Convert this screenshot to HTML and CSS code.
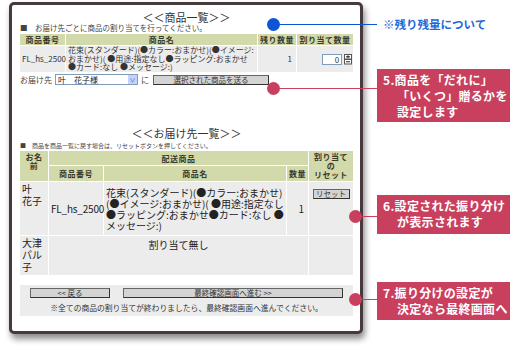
FILE: index.html
```html
<!DOCTYPE html>
<html lang="ja">
<head>
    <meta charset="UTF-8">
    <title>商品の割り当て</title>
    <link rel="stylesheet" href="styles.css">
</head>
<body>
    <div class="page">
        <div class="frame">
            <h2 class="title">＜＜商品一覧＞＞</h2>
            <p class="note">■　お届け先ごとに商品の割り当てを行ってください。</p>

            <table class="grid items">
                <colgroup>
                    <col class="w45"><col class="w191"><col class="w38"><col class="w56">
                </colgroup>
                <tr class="head">
                    <th>商品番号</th>
                    <th>商品名</th>
                    <th>残り数量</th>
                    <th>割り当て数量</th>
                </tr>
                <tr class="row">
                    <td class="code">FL_hs_2500</td>
                    <td class="name">花束(スタンダード)(●カラー:おまかせ)(●イメージ:<br>おまかせ)( ●用途:指定なし●ラッピング:おまかせ<br>●カード:なし ●メッセージ:)</td>
                    <td class="num">1</td>
                    <td class="qty">
                        <span class="numbox">0</span>
                        <svg class="spin" width="8" height="11" viewBox="0 0 8 11">
                            <rect x="0.5" y="0.5" width="7" height="4.5" fill="#fff" stroke="#555"/>
                            <rect x="0.5" y="5.5" width="7" height="4.5" fill="#fff" stroke="#555"/>
                            <path d="M2 2.8h4M4 1.3v3M2 7.8h4" stroke="#222" stroke-width="1"/>
                        </svg>
                    </td>
                </tr>
            </table>

            <div class="send">
                <span>お届け先</span>
                <span class="select">叶　花子様<span class="arrow">∨</span></span>
                <span>に</span>
                <button class="btn send-btn">選択された商品を送る</button>
            </div>

            <h2 class="title second">＜＜お届け先一覧＞＞</h2>
            <p class="note small">■　商品を商品一覧に戻す場合は、リセットボタンを押してください。</p>

            <table class="grid dest">
                <colgroup>
                    <col class="w28"><col class="w54"><col class="w182"><col class="w21"><col class="w44">
                </colgroup>
                <tr class="head h1">
                    <th rowspan="2" class="top">お名<br>前</th>
                    <th colspan="3">配送商品</th>
                    <th rowspan="2" class="top">割り当て<br>の<br>リセット</th>
                </tr>
                <tr class="head h2">
                    <th>商品番号</th>
                    <th>商品名</th>
                    <th>数量</th>
                </tr>
                <tr class="row r1">
                    <td class="who">叶<br>花子</td>
                    <td class="code">FL_hs_2500</td>
                    <td class="name">花束(スタンダード)(●カラー:おまかせ)<br>(●イメージ:おまかせ)( ●用途:指定なし<br>●ラッピング:おまかせ●カード:なし ●<br>メッセージ:)</td>
                    <td class="num">1</td>
                    <td class="reset"><button class="btn reset-btn">リセット</button></td>
                </tr>
                <tr class="row r2">
                    <td class="who">大津<br>パル<br>子</td>
                    <td colspan="3" class="none">割り当て無し</td>
                    <td></td>
                </tr>
            </table>

            <div class="bar">
                <div class="bar-buttons">
                    <button class="btn back">&lt;&lt; 戻る</button>
                    <button class="btn next">最終確認画面へ進む &gt;&gt;</button>
                </div>
                <p class="bar-note">※全ての商品の割り当てが終わりましたら、最終確認画面へ進んでください。</p>
            </div>
        </div>

        <div class="notes">
            <p class="blue-note">※残り残量について</p>
            <div class="callout c5">5.商品を「だれに」<br>「いくつ」贈るかを<br>設定します</div>
            <div class="callout c6">6.設定された振り分け<br>が表示されます</div>
            <div class="callout c7">7.振り分けの設定が<br>決定なら最終画面へ</div>
        </div>

        <span class="pin blue p1"></span>
        <span class="pin p5"></span>
        <span class="pin p6"></span>
        <span class="pin p7"></span>
    </div>
</body>
</html>
```

FILE: styles.css
```css
* {
    margin: 0;
    padding: 0;
    box-sizing: border-box;
}

body {
    font-family: 'Noto Sans CJK JP', 'Liberation Sans', sans-serif;
    background-color: #fff;
    color: #333;
}

.page {
    position: relative;
    display: flex;
    align-items: flex-start;
    padding: 2px 0 0 9px;
    width: 516px;
    height: 350px;
}

.frame {
    width: 354px;
    height: 332px;
    border: 3px solid #463a3c;
    border-radius: 5px;
    box-shadow: 2px 5px 6px rgba(0, 0, 0, 0.45);
    padding: 0 7px 0 8px;
    background-color: #fff;
}

.title {
    font-size: 11px;
    font-weight: normal;
    line-height: 12px;
    text-align: center;
    margin-top: 6px;
    color: #333;
}

.title.second {
    margin-top: 42px;
}

.note {
    font-size: 7.5px;
    line-height: 10px;
    color: #444;
    white-space: nowrap;
}

.note.small {
    font-size: 6px;
    line-height: 9px;
    margin-top: 2px;
}

.grid {
    border-collapse: separate;
    border-spacing: 1px;
    table-layout: fixed;
    width: 335px;
    margin: 0 -1px;
}

.grid th,
.grid td {
    padding: 0;
    background-color: #ececec;
    vertical-align: middle;
}

.grid .head th {
    background-color: #d2d9aa;
    font-size: 8px;
    font-weight: bold;
    color: #3a3a2a;
    letter-spacing: 0.5px;
    text-align: center;
    line-height: 9px;
}

.w45 { width: 45px; }
.w191 { width: 191px; }
.w38 { width: 38px; }
.w56 { width: 56px; }
.w28 { width: 28px; }
.w54 { width: 54px; }
.w182 { width: 182px; }
.w21 { width: 21px; }
.w44 { width: 44px; }

.items .head th {
    height: 11px;
}

.items .row td {
    height: 26px;
    font-size: 8px;
    line-height: 8.5px;
}

.items .code {
    padding-left: 2px;
}

.items .name {
    padding-left: 2px;
    white-space: nowrap;
}

.num {
    text-align: right;
    padding-right: 4px !important;
}

.qty {
    text-align: right;
    padding-right: 1px !important;
}

.numbox {
    display: inline-block;
    width: 20px;
    height: 11px;
    border: 1px solid #7f9db9;
    background-color: #fff;
    font-size: 8px;
    line-height: 9px;
    text-align: right;
    padding-right: 2px;
    vertical-align: middle;
}

.spin {
    vertical-align: middle;
}

.send {
    display: flex;
    align-items: center;
    gap: 3px;
    font-size: 8px;
    color: #444;
    margin-top: 1px;
    height: 11px;
}

.select {
    position: relative;
    display: inline-block;
    width: 83px;
    height: 11px;
    border: 1px solid #7f9db9;
    font-size: 8px;
    line-height: 9px;
    padding-left: 2px;
    color: #222;
}

.arrow {
    position: absolute;
    right: 0;
    top: 0;
    width: 9px;
    height: 9px;
    background-color: #c3d3fd;
    color: #4d6185;
    font-size: 6px;
    line-height: 9px;
    text-align: center;
}

.btn {
    font-family: 'Noto Sans CJK JP', 'Liberation Sans', sans-serif;
    background-color: #d4d4d4;
    border: 1px solid #666;
    border-right-color: #333;
    border-bottom-color: #333;
    color: #333;
    font-size: 7.5px;
    line-height: 8px;
    height: 10px;
    cursor: pointer;
}

.send-btn {
    width: 116px;
    margin-left: 1px;
}

.dest .h1 th {
    height: 14px;
}

.dest .h2 th {
    height: 15px;
}

.dest .head th.top {
    vertical-align: top;
    padding-top: 1px;
    line-height: 9px;
}

.dest .row td {
    font-size: 10px;
    line-height: 11px;
    color: #222;
}

.dest .r1 td {
    height: 53px;
}

.dest .r2 td {
    height: 39px;
}

.dest .row .who {
    vertical-align: top;
    padding: 1px 0 0 2px;
    line-height: 12px;
}

.dest .code {
    font-size: 8.5px;
    letter-spacing: -0.2px;
    padding-left: 2px;
    white-space: nowrap;
}

.dest .name {
    padding-left: 2px;
    white-space: nowrap;
    font-size: 9.6px;
}

.dest .reset {
    vertical-align: top;
    text-align: center;
    padding-top: 5px;
}

.reset-btn {
    width: 37px;
}

.dest .none {
    vertical-align: top;
    text-align: center;
    padding-top: 3px;
}

.bar {
    margin-top: 9px;
    background-color: #ececec;
    height: 31px;
    padding-top: 3px;
}

.bar-buttons {
    display: flex;
    gap: 13px;
    padding-left: 10px;
}

.back {
    width: 80px;
}

.next {
    width: 220px;
}

.bar-note {
    font-size: 7.8px;
    line-height: 10px;
    text-align: center;
    margin-top: 5px;
    color: #333;
    white-space: nowrap;
}

.notes {
    margin-left: 14px;
    width: 133px;
}

.blue-note {
    margin-top: 15px;
    height: 14px;
    font-size: 11.5px;
    line-height: 14px;
    font-weight: bold;
    color: #1c6ad8;
    padding-left: 6px;
    white-space: nowrap;
}

.callout {
    background-color: #c9405f;
    color: #fff;
    font-size: 12px;
    font-weight: bold;
    line-height: 16px;
    padding: 3px 0 0 20px;
    text-indent: -14px;
    white-space: nowrap;
    letter-spacing: 0.3px;
}

.c5 {
    margin-top: 38px;
    height: 53px;
}

.c6 {
    margin-top: 73px;
    height: 39px;
}

.c7 {
    margin-top: 48px;
    height: 38px;
}

.pin {
    position: absolute;
    height: 1px;
    background-color: #c9405f;
}

.pin::before {
    content: "";
    position: absolute;
    left: -6px;
    top: -6px;
    width: 13px;
    height: 13px;
    border-radius: 50%;
    background-color: #c9405f;
}

.pin.blue,
.pin.blue::before {
    background-color: #0c55d6;
}

.p1 { left: 273px; top: 24px; width: 104px; }
.p5 { left: 273px; top: 88px; width: 104px; }
.p6 { left: 355px; top: 216px; width: 22px; }
.p7 { left: 355px; top: 299px; width: 22px; }
```
